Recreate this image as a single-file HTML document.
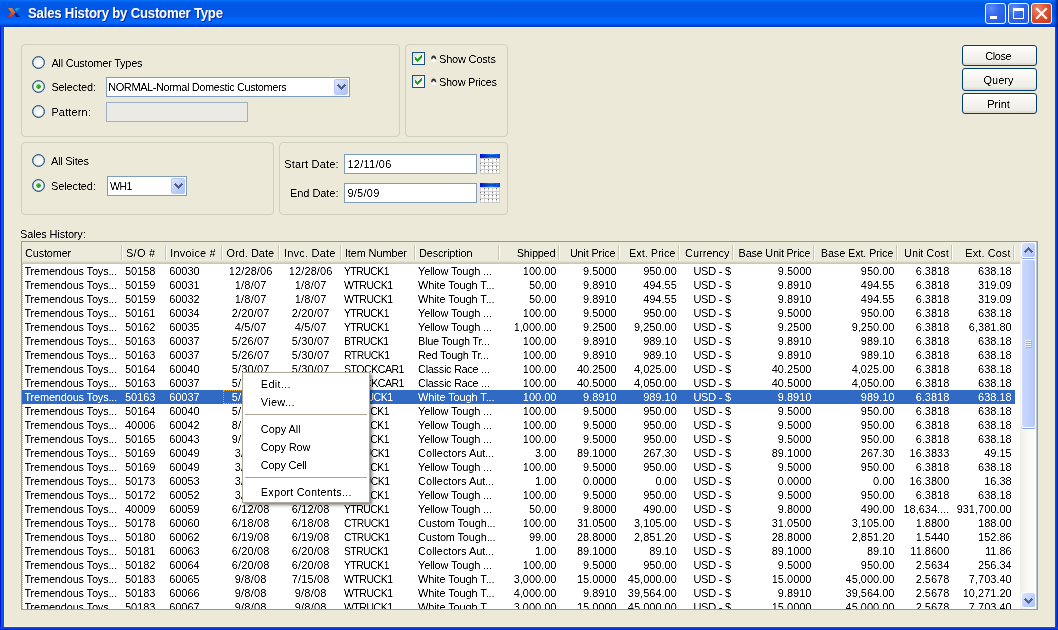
<!DOCTYPE html>
<html>
<head>
<meta charset="utf-8">
<title>Sales History by Customer Type</title>
<style>
html,body{margin:0;padding:0;}
body{width:1058px;height:630px;overflow:hidden;position:relative;background:#ece9d8;font-family:"Liberation Sans",sans-serif;font-size:11px;color:#000;}
div{box-sizing:border-box;}
.abs,.t,.sep,.selrow,.gb,.radio,.chk,.btn,.inp,.combo,.cal{position:absolute;}
.t{filter:url(#crisp);transform-origin:0 0;}
.t{white-space:pre;line-height:14px;height:14px;font-size:11px;}
.t.s{color:#fff;}
/* window frame */
#title{left:0;top:0;width:1058px;height:27px;background:linear-gradient(to bottom,#0a72fb 0px,#0368f3 1px,#0058e6 3px,#0057e5 13px,#005cec 16px,#0066fa 20px,#0069ff 22px,#0060f2 24px,#0048d8 25px,#0036c0 27px);}
#bl{left:0;top:27px;width:4px;height:603px;background:linear-gradient(to right,#0019cf 0px,#0019cf 1px,#0a50e6 1px,#0855e8 3px,#0048d8 4px);}
#br{left:1055px;top:27px;width:3px;height:603px;background:linear-gradient(to right,#0a50e6 0px,#0848dc 1px,#0030c8 2px,#0019cf 3px);}
#bb{left:0;top:627px;width:1058px;height:3px;background:linear-gradient(to bottom,#0048d8 0px,#0a50e6 1px,#0019cf 3px);}
#hl{left:4px;top:27px;width:1051px;height:600px;border:1px solid #f7f3e2;border-right-color:#ece9d8;}
#ttext{left:27.6px;top:5px;font-size:14px;font-weight:700;color:#fff;line-height:16px;height:16px;letter-spacing:-0.2px;white-space:pre;transform:scaleX(0.938);transform-origin:0 0;text-shadow:1px 1px 0 #0a2a9a;}
.wb{position:absolute;top:3px;width:21px;height:21px;border:1px solid #fff;border-radius:3px;background:radial-gradient(circle at 28% 22%,#5c8df8 0%,#3068ee 40%,#2458e0 100%);}
#wclose{background:radial-gradient(circle at 30% 25%,#ee8a6c 0%,#dd5230 45%,#c63412 100%);}
/* group boxes */
.gb{border:1px solid #d0d0bf;border-radius:4px;}
/* radio */
.radio{width:13px;height:13px;border-radius:50%;border:1px solid #1c5180;box-shadow:inset 0 0 0 0.5px rgba(28,81,128,0.55);background:radial-gradient(circle at 65% 65%,#ffffff 0%,#f4f3ee 45%,#dcdbd2 100%);}
.radio.on::after{content:"";position:absolute;left:3px;top:3px;width:5px;height:5px;background:linear-gradient(135deg,#63d95a 0%,#2cae2c 50%,#1a941a 100%);clip-path:polygon(50% -12%,112% 50%,50% 112%,-12% 50%);}
/* checkbox */
.chk{width:13px;height:13px;border:1px solid #1c5180;background:linear-gradient(135deg,#dcdbd2 0%,#f4f3ee 50%,#ffffff 100%);}
/* inputs */
.inp{border:1px solid #7f9db9;background:#fff;}
.inp.dis{background:#ebeae4;border-color:#9db0c6;}
.combo{border:1px solid #7f9db9;background:#fff;}
.cbtn{position:absolute;right:1px;top:1px;bottom:1px;width:14px;border-radius:2px;border:1px solid #b4c6f6;background:linear-gradient(135deg,#dfe8fe 0%,#c3d3fc 45%,#adc1f6 100%);}
/* push buttons */
.btn span{display:inline-block;}
.btn{width:75px;height:21px;left:962px;border:1px solid #003c74;border-radius:3px;background:linear-gradient(to bottom,#ffffff 0%,#f6f5f0 40%,#eeede6 85%,#d9d6c8 100%);text-align:center;line-height:19px;font-size:11px;letter-spacing:-0.1px;}
/* table */
#tbl{left:21px;top:241px;width:1017px;height:369px;border:1px solid #7f9db9;background:#fff;}
#thead{left:22px;top:242px;width:999px;height:22px;background:linear-gradient(to bottom,#ebeadb 0px,#ebeadb 19px,#e3e0cf 19px,#e3e0cf 20px,#d6d2c1 20px,#d6d2c1 21px,#cac6b3 21px,#cac6b3 22px);}
.sep{top:245px;width:2px;height:15px;border-left:1px solid #c7c5b2;border-right:1px solid #fff;}
.selrow{left:22px;width:993px;height:14px;background:#316ac5;}
#dots{left:22px;top:264px;width:1px;height:345px;background:repeating-linear-gradient(to bottom,#b8b4a4 0px,#b8b4a4 1px,#fff 1px,#fff 2px);}
#clip{left:0;top:0;width:1058px;height:609px;overflow:hidden;}
/* scrollbar */
#sb{left:1020px;top:242px;width:17px;height:367px;background:linear-gradient(to right,#eeece5 0px,#f4f2ed 3px,#fbfaf7 9px,#fefefb 17px);}
.sbb{position:absolute;left:1021px;width:15px;height:16px;margin-top:-1px;border:1px solid #fff;border-radius:3px;background:linear-gradient(135deg,#dbe5fe 0%,#c3d3fc 45%,#adc1f6 100%);}
.sbl{position:absolute;left:1021px;width:15px;height:3px;margin-top:-2px;border:0;border-bottom:1px solid #8aa6dc;border-radius:0 0 3px 3px;background:transparent;}
#thumb{left:1021px;top:259px;width:15px;height:169px;border-radius:3px;border:1px solid #fff;background:linear-gradient(to right,#cad8fc 0%,#c2d2fb 45%,#b4c7f7 100%);}
/* menu */
#menu{left:242px;top:372px;width:128px;height:131px;background:#fff;border:1px solid #aca899;box-shadow:2px 2px 3px rgba(0,0,0,0.5);}
.mi{position:absolute;left:19px;white-space:pre;line-height:14px;height:14px;letter-spacing:0px;}
.msep{position:absolute;left:2px;width:122px;height:1px;background:#aca899;}
</style>
</head>
<body>
<svg width="0" height="0" style="position:absolute"><defs>
<filter id="crisp" x="-0.1" y="-0.1" width="1.2" height="1.2" color-interpolation-filters="sRGB"><feComponentTransfer><feFuncA type="table" tableValues="0 0 0.5 1 1"/></feComponentTransfer></filter>
</defs></svg>
<!-- window frame -->
<div class="abs" id="hl"></div>
<div class="abs" id="title"></div>
<div class="abs" id="bl"></div>
<div class="abs" style="left:1054px;top:0;width:4px;height:27px;background:linear-gradient(to right,rgba(0,30,150,0) 0px,rgba(0,30,150,0.55) 2px,rgba(0,20,130,0.8) 4px)"></div>
<div class="abs" id="br"></div>
<div class="abs" id="bb"></div>
<svg class="abs" style="position:absolute;left:7px;top:7px" width="14" height="11" viewBox="7 7 14 11">
  <defs><linearGradient id="og" x1="0" y1="0" x2="0" y2="1"><stop offset="0" stop-color="#e8841e"/><stop offset="0.5" stop-color="#e65a1c"/><stop offset="1" stop-color="#dc261c"/></linearGradient></defs>
  <polygon points="8.1,8 12,8 15.3,12.3 11.8,17 8,17 11.2,12.5" fill="url(#og)"/>
  <polygon points="14.7,9.2 16.2,8 19.8,8 16.6,11.6" fill="#11a6d8"/>
  <polygon points="15.4,13 16.6,13.2 20,17 16.2,17 14.6,14.8" fill="#0a1f8c"/>
</svg>
<div class="abs" id="ttext">Sales History by Customer Type</div>
<div class="wb" style="left:985px"><div class="abs" style="left:4px;top:12px;width:7px;height:3px;background:#fff"></div></div>
<div class="wb" style="left:1008px"><div class="abs" style="left:4px;top:4px;width:11px;height:11px;border:1px solid #fff;border-top-width:3px"></div></div>
<div class="wb" id="wclose" style="left:1031px"><svg width="19" height="19" style="position:absolute;left:0;top:0"><path d="M5 5 L14 14 M14 5 L5 14" stroke="#fff" stroke-width="2.2" stroke-linecap="square"/></svg></div>

<!-- group boxes -->
<div class="gb" style="left:21px;top:44px;width:379px;height:93px"></div>
<div class="gb" style="left:405px;top:44px;width:103px;height:93px"></div>
<div class="gb" style="left:21px;top:142px;width:253px;height:73px"></div>
<div class="gb" style="left:279px;top:142px;width:229px;height:73px"></div>

<!-- customer type group -->
<div class="radio" style="left:32px;top:56px"></div>
<div class="radio on" style="left:32px;top:80px"></div>
<div class="combo" style="left:106px;top:77px;width:244px;height:20px"><div class="cbtn"></div></div>
<svg class="abs" style="left:337px;top:84px" width="9" height="6" shape-rendering="crispEdges"><path d="M1 0h1v1h-1zM7 0h1v1h-1zM0 1h3v1h-3zM6 1h3v1h-3zM1 2h3v1h-3zM5 2h3v1h-3zM2 3h5v1h-5zM3 4h3v1h-3zM4 5h1v1h-1z" fill="#4d6185"/></svg>
<div class="radio" style="left:32px;top:105px"></div>
<div class="inp dis" style="left:106px;top:102px;width:142px;height:20px"></div>

<!-- checkboxes -->
<div class="chk" style="left:412px;top:52px"></div>
<svg class="abs" style="left:415px;top:55px" width="7" height="7" shape-rendering="crispEdges"><path d="M6 0h1v1h-1zM5 1h2v1h-2zM0 2h1v1h-1zM4 2h3v1h-3zM0 3h2v1h-2zM3 3h3v1h-3zM0 4h5v1h-5zM1 5h3v1h-3zM2 6h1v1h-1z" fill="#21a121"/></svg><svg class="abs" style="left:431px;top:55px" width="6" height="8"><path d="M0.5 6.6 L0.5 3 Q2.65 0 4.8 3 L4.8 6.6 Q2.65 7.6 0.5 6.6 Z" fill="#ffffff"/><path d="M0.1 4.3 Q0.2 0.5 2.65 0.5 Q5.1 0.5 5.2 4.3 L3.8 4.3 Q3.7 2.5 2.65 2.5 Q1.6 2.5 1.5 4.3 Z" fill="#2e2e2e"/></svg>
<div class="chk" style="left:412px;top:75px"></div>
<svg class="abs" style="left:415px;top:78px" width="7" height="7" shape-rendering="crispEdges"><path d="M6 0h1v1h-1zM5 1h2v1h-2zM0 2h1v1h-1zM4 2h3v1h-3zM0 3h2v1h-2zM3 3h3v1h-3zM0 4h5v1h-5zM1 5h3v1h-3zM2 6h1v1h-1z" fill="#21a121"/></svg><svg class="abs" style="left:431px;top:78px" width="6" height="8"><path d="M0.5 6.6 L0.5 3 Q2.65 0 4.8 3 L4.8 6.6 Q2.65 7.6 0.5 6.6 Z" fill="#ffffff"/><path d="M0.1 4.3 Q0.2 0.5 2.65 0.5 Q5.1 0.5 5.2 4.3 L3.8 4.3 Q3.7 2.5 2.65 2.5 Q1.6 2.5 1.5 4.3 Z" fill="#2e2e2e"/></svg>

<!-- sites group -->
<div class="radio" style="left:32px;top:154px"></div>
<div class="radio on" style="left:32px;top:179px"></div>
<div class="combo" style="left:107px;top:176px;width:80px;height:20px"><div class="cbtn"></div></div>
<svg class="abs" style="left:174px;top:183px" width="9" height="6" shape-rendering="crispEdges"><path d="M1 0h1v1h-1zM7 0h1v1h-1zM0 1h3v1h-3zM6 1h3v1h-3zM1 2h3v1h-3zM5 2h3v1h-3zM2 3h5v1h-5zM3 4h3v1h-3zM4 5h1v1h-1z" fill="#4d6185"/></svg>

<!-- dates group -->
<div class="inp" style="left:344px;top:154px;width:133px;height:20px"></div>
<svg class="abs" style="left:480px;top:154px" width="20" height="20" shape-rendering="crispEdges"><defs><linearGradient id="cg154" x1="0" y1="0" x2="1" y2="0"><stop offset="0" stop-color="#0008e0"/><stop offset="0.55" stop-color="#1a86e4"/><stop offset="1" stop-color="#1038f0"/></linearGradient></defs><rect x="0" y="0" width="20" height="20" fill="#fff"/><rect x="0" y="0" width="20" height="4" fill="url(#cg154)"/><rect x="2" y="1" width="14" height="2" fill="#0a2a9c" opacity="0.55"/><rect x="0" y="4" width="1" height="16" fill="#d0d0d0"/><rect x="4" y="4" width="1" height="16" fill="#d0d0d0"/><rect x="8" y="4" width="1" height="16" fill="#d0d0d0"/><rect x="12" y="4" width="1" height="16" fill="#d0d0d0"/><rect x="16" y="4" width="1" height="16" fill="#d0d0d0"/><rect x="19" y="4" width="1" height="16" fill="#d0d0d0"/><rect x="0" y="4" width="20" height="1" fill="#cbcbcb"/><rect x="0" y="8" width="20" height="1" fill="#cbcbcb"/><rect x="0" y="11" width="20" height="1" fill="#cbcbcb"/><rect x="0" y="15" width="20" height="1" fill="#cbcbcb"/><rect x="0" y="19" width="20" height="1" fill="#cbcbcb"/><rect x="16" y="5" width="1" height="1" fill="#6e6e6e"/><rect x="0" y="9" width="1" height="1" fill="#6e6e6e"/><rect x="12" y="9" width="1" height="1" fill="#6e6e6e"/><rect x="4" y="12" width="1" height="1" fill="#6e6e6e"/><rect x="8" y="12" width="1" height="1" fill="#6e6e6e"/><rect x="12" y="12" width="1" height="1" fill="#6e6e6e"/><rect x="16" y="12" width="1" height="1" fill="#6e6e6e"/><rect x="0" y="16" width="1" height="1" fill="#6e6e6e"/><rect x="8" y="16" width="1" height="1" fill="#6e6e6e"/><rect x="16" y="16" width="1" height="1" fill="#6e6e6e"/><rect x="4" y="5" width="1" height="1" fill="#6e6e6e"/><rect x="8" y="5" width="1" height="1" fill="#6e6e6e"/><rect x="4" y="9" width="1" height="1" fill="#6e6e6e"/><rect x="12" y="16" width="1" height="1" fill="#6e6e6e"/></svg>
<div class="inp" style="left:344px;top:183px;width:133px;height:20px"></div>
<svg class="abs" style="left:480px;top:183px" width="20" height="20" shape-rendering="crispEdges"><defs><linearGradient id="cg183" x1="0" y1="0" x2="1" y2="0"><stop offset="0" stop-color="#0008e0"/><stop offset="0.55" stop-color="#1a86e4"/><stop offset="1" stop-color="#1038f0"/></linearGradient></defs><rect x="0" y="0" width="20" height="20" fill="#fff"/><rect x="0" y="0" width="20" height="4" fill="url(#cg183)"/><rect x="2" y="1" width="14" height="2" fill="#0a2a9c" opacity="0.55"/><rect x="0" y="4" width="1" height="16" fill="#d0d0d0"/><rect x="4" y="4" width="1" height="16" fill="#d0d0d0"/><rect x="8" y="4" width="1" height="16" fill="#d0d0d0"/><rect x="12" y="4" width="1" height="16" fill="#d0d0d0"/><rect x="16" y="4" width="1" height="16" fill="#d0d0d0"/><rect x="19" y="4" width="1" height="16" fill="#d0d0d0"/><rect x="0" y="4" width="20" height="1" fill="#cbcbcb"/><rect x="0" y="8" width="20" height="1" fill="#cbcbcb"/><rect x="0" y="11" width="20" height="1" fill="#cbcbcb"/><rect x="0" y="15" width="20" height="1" fill="#cbcbcb"/><rect x="0" y="19" width="20" height="1" fill="#cbcbcb"/><rect x="16" y="5" width="1" height="1" fill="#6e6e6e"/><rect x="0" y="9" width="1" height="1" fill="#6e6e6e"/><rect x="12" y="9" width="1" height="1" fill="#6e6e6e"/><rect x="4" y="12" width="1" height="1" fill="#6e6e6e"/><rect x="8" y="12" width="1" height="1" fill="#6e6e6e"/><rect x="12" y="12" width="1" height="1" fill="#6e6e6e"/><rect x="16" y="12" width="1" height="1" fill="#6e6e6e"/><rect x="0" y="16" width="1" height="1" fill="#6e6e6e"/><rect x="8" y="16" width="1" height="1" fill="#6e6e6e"/><rect x="16" y="16" width="1" height="1" fill="#6e6e6e"/><rect x="4" y="5" width="1" height="1" fill="#6e6e6e"/><rect x="8" y="5" width="1" height="1" fill="#6e6e6e"/><rect x="4" y="9" width="1" height="1" fill="#6e6e6e"/><rect x="12" y="16" width="1" height="1" fill="#6e6e6e"/></svg>

<!-- push buttons -->
<div class="btn" style="top:45px"></div>
<div class="btn" style="top:68px;height:23px"></div>
<div class="btn" style="top:93px"></div>

<!-- table -->
<div class="abs" id="tbl"></div>
<div class="abs" id="thead"></div>
<div class="abs" id="dots"></div>
<div class="abs" id="clip">
<div class="sep" style="left:121px"></div>
<div class="sep" style="left:165px"></div>
<div class="sep" style="left:221px"></div>
<div class="sep" style="left:278px"></div>
<div class="sep" style="left:340px"></div>
<div class="sep" style="left:414px"></div>
<div class="sep" style="left:498px"></div>
<div class="sep" style="left:558px"></div>
<div class="sep" style="left:618px"></div>
<div class="sep" style="left:678px"></div>
<div class="sep" style="left:732px"></div>
<div class="sep" style="left:813px"></div>
<div class="sep" style="left:896px"></div>
<div class="sep" style="left:951px"></div>
<div class="sep" style="left:1013px"></div>
<div class="selrow" style="top:390px"></div><div class="abs" style="left:223px;top:390px;width:56px;height:14px;border:1px dotted #e8a53a"></div>
<div class="t h" style="left:25.00px;top:246px;letter-spacing:-0.211px;">Customer</div>
<div class="t h" style="left:126.00px;top:246px;letter-spacing:0.255px;">S/O #</div>
<div class="t h" style="left:170.30px;top:246px;letter-spacing:0.174px;">Invoice #</div>
<div class="t h" style="left:226.40px;top:246px;letter-spacing:0.012px;">Ord. Date</div>
<div class="t h" style="left:283.90px;top:246px;letter-spacing:0.217px;">Invc. Date</div>
<div class="t h" style="left:344.90px;top:246px;letter-spacing:-0.143px;">Item Number</div>
<div class="t h" style="left:419.00px;top:246px;letter-spacing:-0.148px;">Description</div>
<div class="t h" style="left:516.75px;top:246px;letter-spacing:-0.254px;">Shipped</div>
<div class="t h" style="left:569.89px;top:246px;letter-spacing:-0.209px;">Unit Price</div>
<div class="t h" style="left:629.12px;top:246px;letter-spacing:-0.078px;">Ext. Price</div>
<div class="t h" style="left:685.00px;top:246px;letter-spacing:-0.016px;">Currency</div>
<div class="t h" style="left:738.61px;top:246px;letter-spacing:-0.287px;">Base Unit Price</div>
<div class="t h" style="left:820.73px;top:246px;letter-spacing:-0.174px;">Base Ext. Price</div>
<div class="t h" style="left:904.04px;top:246px;letter-spacing:-0.061px;">Unit Cost</div>
<div class="t h" style="left:965.36px;top:246px;letter-spacing:0.064px;">Ext. Cost</div>
<div class="t" style="left:24.40px;top:264px;letter-spacing:-0.183px;">Tremendous Toys...</div>
<div class="t" style="left:125.00px;top:264px;letter-spacing:-0.039px;">50158</div>
<div class="t" style="left:169.30px;top:264px;letter-spacing:-0.079px;">60030</div>
<div class="t" style="left:228.85px;top:264px;letter-spacing:0.096px;">12/28/06</div>
<div class="t" style="left:288.85px;top:264px;letter-spacing:0.096px;">12/28/06</div>
<div class="t" style="left:343.60px;top:264px;letter-spacing:-0.550px;transform:scaleX(0.9475);">YTRUCK1</div>
<div class="t" style="left:418.00px;top:264px;letter-spacing:-0.178px;">Yellow Tough ...</div>
<div class="t" style="left:522.84px;top:264px;">100.00</div>
<div class="t" style="left:583.04px;top:264px;">9.5000</div>
<div class="t" style="left:643.14px;top:264px;">950.00</div>
<div class="t" style="left:693.40px;top:264px;letter-spacing:-0.246px;">USD - $</div>
<div class="t" style="left:777.84px;top:264px;">9.5000</div>
<div class="t" style="left:860.84px;top:264px;">950.00</div>
<div class="t" style="left:915.64px;top:264px;">6.3818</div>
<div class="t" style="left:978.04px;top:264px;">638.18</div>
<div class="t" style="left:24.40px;top:278px;letter-spacing:-0.183px;">Tremendous Toys...</div>
<div class="t" style="left:125.00px;top:278px;letter-spacing:-0.039px;">50159</div>
<div class="t" style="left:169.30px;top:278px;letter-spacing:-0.079px;">60031</div>
<div class="t" style="left:234.80px;top:278px;letter-spacing:0.201px;">1/8/07</div>
<div class="t" style="left:294.80px;top:278px;letter-spacing:0.201px;">1/8/07</div>
<div class="t" style="left:343.60px;top:278px;letter-spacing:-0.550px;transform:scaleX(0.9596);">WTRUCK1</div>
<div class="t" style="left:418.00px;top:278px;letter-spacing:-0.124px;">White Tough T...</div>
<div class="t" style="left:528.97px;top:278px;">50.00</div>
<div class="t" style="left:583.04px;top:278px;">9.8910</div>
<div class="t" style="left:643.14px;top:278px;">494.55</div>
<div class="t" style="left:693.40px;top:278px;letter-spacing:-0.246px;">USD - $</div>
<div class="t" style="left:777.84px;top:278px;">9.8910</div>
<div class="t" style="left:860.84px;top:278px;">494.55</div>
<div class="t" style="left:915.64px;top:278px;">6.3818</div>
<div class="t" style="left:978.04px;top:278px;">319.09</div>
<div class="t" style="left:24.40px;top:292px;letter-spacing:-0.183px;">Tremendous Toys...</div>
<div class="t" style="left:125.00px;top:292px;letter-spacing:-0.039px;">50159</div>
<div class="t" style="left:169.30px;top:292px;letter-spacing:-0.079px;">60032</div>
<div class="t" style="left:234.80px;top:292px;letter-spacing:0.201px;">1/8/07</div>
<div class="t" style="left:294.80px;top:292px;letter-spacing:0.201px;">1/8/07</div>
<div class="t" style="left:343.60px;top:292px;letter-spacing:-0.550px;transform:scaleX(0.9596);">WTRUCK1</div>
<div class="t" style="left:418.00px;top:292px;letter-spacing:-0.124px;">White Tough T...</div>
<div class="t" style="left:528.97px;top:292px;">50.00</div>
<div class="t" style="left:583.04px;top:292px;">9.8910</div>
<div class="t" style="left:643.14px;top:292px;">494.55</div>
<div class="t" style="left:693.40px;top:292px;letter-spacing:-0.246px;">USD - $</div>
<div class="t" style="left:777.84px;top:292px;">9.8910</div>
<div class="t" style="left:860.84px;top:292px;">494.55</div>
<div class="t" style="left:915.64px;top:292px;">6.3818</div>
<div class="t" style="left:978.04px;top:292px;">319.09</div>
<div class="t" style="left:24.40px;top:306px;letter-spacing:-0.183px;">Tremendous Toys...</div>
<div class="t" style="left:125.00px;top:306px;letter-spacing:-0.039px;">50161</div>
<div class="t" style="left:169.30px;top:306px;letter-spacing:-0.079px;">60034</div>
<div class="t" style="left:231.74px;top:306px;letter-spacing:0.171px;">2/20/07</div>
<div class="t" style="left:291.74px;top:306px;letter-spacing:0.171px;">2/20/07</div>
<div class="t" style="left:343.60px;top:306px;letter-spacing:-0.550px;transform:scaleX(0.9475);">YTRUCK1</div>
<div class="t" style="left:418.00px;top:306px;letter-spacing:-0.178px;">Yellow Tough ...</div>
<div class="t" style="left:522.84px;top:306px;">100.00</div>
<div class="t" style="left:583.04px;top:306px;">9.5000</div>
<div class="t" style="left:643.14px;top:306px;">950.00</div>
<div class="t" style="left:693.40px;top:306px;letter-spacing:-0.246px;">USD - $</div>
<div class="t" style="left:777.84px;top:306px;">9.5000</div>
<div class="t" style="left:860.84px;top:306px;">950.00</div>
<div class="t" style="left:915.64px;top:306px;">6.3818</div>
<div class="t" style="left:978.04px;top:306px;">638.18</div>
<div class="t" style="left:24.40px;top:320px;letter-spacing:-0.183px;">Tremendous Toys...</div>
<div class="t" style="left:125.00px;top:320px;letter-spacing:-0.039px;">50162</div>
<div class="t" style="left:169.30px;top:320px;letter-spacing:-0.079px;">60035</div>
<div class="t" style="left:234.80px;top:320px;letter-spacing:0.201px;">4/5/07</div>
<div class="t" style="left:294.80px;top:320px;letter-spacing:0.201px;">4/5/07</div>
<div class="t" style="left:343.60px;top:320px;letter-spacing:-0.550px;transform:scaleX(0.9475);">YTRUCK1</div>
<div class="t" style="left:418.00px;top:320px;letter-spacing:-0.178px;">Yellow Tough ...</div>
<div class="t" style="left:513.67px;top:320px;">1,000.00</div>
<div class="t" style="left:583.04px;top:320px;">9.2500</div>
<div class="t" style="left:633.97px;top:320px;">9,250.00</div>
<div class="t" style="left:693.40px;top:320px;letter-spacing:-0.246px;">USD - $</div>
<div class="t" style="left:777.84px;top:320px;">9.2500</div>
<div class="t" style="left:851.67px;top:320px;">9,250.00</div>
<div class="t" style="left:915.64px;top:320px;">6.3818</div>
<div class="t" style="left:968.87px;top:320px;">6,381.80</div>
<div class="t" style="left:24.40px;top:334px;letter-spacing:-0.183px;">Tremendous Toys...</div>
<div class="t" style="left:125.00px;top:334px;letter-spacing:-0.039px;">50163</div>
<div class="t" style="left:169.30px;top:334px;letter-spacing:-0.079px;">60037</div>
<div class="t" style="left:231.74px;top:334px;letter-spacing:0.171px;">5/26/07</div>
<div class="t" style="left:291.74px;top:334px;letter-spacing:0.171px;">5/30/07</div>
<div class="t" style="left:343.60px;top:334px;letter-spacing:-0.550px;transform:scaleX(0.9370);">BTRUCK1</div>
<div class="t" style="left:418.00px;top:334px;letter-spacing:-0.303px;">Blue Tough Tr...</div>
<div class="t" style="left:522.84px;top:334px;">100.00</div>
<div class="t" style="left:583.04px;top:334px;">9.8910</div>
<div class="t" style="left:643.14px;top:334px;">989.10</div>
<div class="t" style="left:693.40px;top:334px;letter-spacing:-0.246px;">USD - $</div>
<div class="t" style="left:777.84px;top:334px;">9.8910</div>
<div class="t" style="left:860.84px;top:334px;">989.10</div>
<div class="t" style="left:915.64px;top:334px;">6.3818</div>
<div class="t" style="left:978.04px;top:334px;">638.18</div>
<div class="t" style="left:24.40px;top:348px;letter-spacing:-0.183px;">Tremendous Toys...</div>
<div class="t" style="left:125.00px;top:348px;letter-spacing:-0.039px;">50163</div>
<div class="t" style="left:169.30px;top:348px;letter-spacing:-0.079px;">60037</div>
<div class="t" style="left:231.74px;top:348px;letter-spacing:0.171px;">5/26/07</div>
<div class="t" style="left:291.74px;top:348px;letter-spacing:0.171px;">5/30/07</div>
<div class="t" style="left:343.60px;top:348px;letter-spacing:-0.550px;transform:scaleX(0.9496);">RTRUCK1</div>
<div class="t" style="left:418.00px;top:348px;letter-spacing:-0.254px;">Red Tough Tr...</div>
<div class="t" style="left:522.84px;top:348px;">100.00</div>
<div class="t" style="left:583.04px;top:348px;">9.8910</div>
<div class="t" style="left:643.14px;top:348px;">989.10</div>
<div class="t" style="left:693.40px;top:348px;letter-spacing:-0.246px;">USD - $</div>
<div class="t" style="left:777.84px;top:348px;">9.8910</div>
<div class="t" style="left:860.84px;top:348px;">989.10</div>
<div class="t" style="left:915.64px;top:348px;">6.3818</div>
<div class="t" style="left:978.04px;top:348px;">638.18</div>
<div class="t" style="left:24.40px;top:362px;letter-spacing:-0.183px;">Tremendous Toys...</div>
<div class="t" style="left:125.00px;top:362px;letter-spacing:-0.039px;">50164</div>
<div class="t" style="left:169.30px;top:362px;letter-spacing:-0.079px;">60040</div>
<div class="t" style="left:231.74px;top:362px;letter-spacing:0.171px;">5/30/07</div>
<div class="t" style="left:291.74px;top:362px;letter-spacing:0.171px;">5/30/07</div>
<div class="t" style="left:343.60px;top:362px;letter-spacing:-0.550px;transform:scaleX(0.9662);">STOCKCAR1</div>
<div class="t" style="left:418.00px;top:362px;letter-spacing:-0.314px;">Classic Race ...</div>
<div class="t" style="left:522.84px;top:362px;">100.00</div>
<div class="t" style="left:576.93px;top:362px;">40.2500</div>
<div class="t" style="left:633.97px;top:362px;">4,025.00</div>
<div class="t" style="left:693.40px;top:362px;letter-spacing:-0.246px;">USD - $</div>
<div class="t" style="left:771.73px;top:362px;">40.2500</div>
<div class="t" style="left:851.67px;top:362px;">4,025.00</div>
<div class="t" style="left:915.64px;top:362px;">6.3818</div>
<div class="t" style="left:978.04px;top:362px;">638.18</div>
<div class="t" style="left:24.40px;top:376px;letter-spacing:-0.183px;">Tremendous Toys...</div>
<div class="t" style="left:125.00px;top:376px;letter-spacing:-0.039px;">50163</div>
<div class="t" style="left:169.30px;top:376px;letter-spacing:-0.079px;">60037</div>
<div class="t" style="left:231.74px;top:376px;letter-spacing:0.171px;">5/30/07</div>
<div class="t" style="left:291.74px;top:376px;letter-spacing:0.171px;">5/30/07</div>
<div class="t" style="left:343.60px;top:376px;letter-spacing:-0.550px;transform:scaleX(0.9662);">STOCKCAR1</div>
<div class="t" style="left:418.00px;top:376px;letter-spacing:-0.314px;">Classic Race ...</div>
<div class="t" style="left:522.84px;top:376px;">100.00</div>
<div class="t" style="left:576.93px;top:376px;">40.5000</div>
<div class="t" style="left:633.97px;top:376px;">4,050.00</div>
<div class="t" style="left:693.40px;top:376px;letter-spacing:-0.246px;">USD - $</div>
<div class="t" style="left:771.73px;top:376px;">40.5000</div>
<div class="t" style="left:851.67px;top:376px;">4,050.00</div>
<div class="t" style="left:915.64px;top:376px;">6.3818</div>
<div class="t" style="left:978.04px;top:376px;">638.18</div>
<div class="t s" style="left:24.40px;top:390px;letter-spacing:-0.183px;">Tremendous Toys...</div>
<div class="t s" style="left:125.00px;top:390px;letter-spacing:-0.039px;">50163</div>
<div class="t s" style="left:169.30px;top:390px;letter-spacing:-0.079px;">60037</div>
<div class="t s" style="left:231.74px;top:390px;letter-spacing:0.171px;">5/30/07</div>
<div class="t s" style="left:291.74px;top:390px;letter-spacing:0.171px;">5/30/07</div>
<div class="t s" style="left:343.60px;top:390px;letter-spacing:-0.550px;transform:scaleX(0.9596);">WTRUCK1</div>
<div class="t s" style="left:418.00px;top:390px;letter-spacing:-0.124px;">White Tough T...</div>
<div class="t s" style="left:522.84px;top:390px;">100.00</div>
<div class="t s" style="left:583.04px;top:390px;">9.8910</div>
<div class="t s" style="left:643.14px;top:390px;">989.10</div>
<div class="t s" style="left:693.40px;top:390px;letter-spacing:-0.246px;">USD - $</div>
<div class="t s" style="left:777.84px;top:390px;">9.8910</div>
<div class="t s" style="left:860.84px;top:390px;">989.10</div>
<div class="t s" style="left:915.64px;top:390px;">6.3818</div>
<div class="t s" style="left:978.04px;top:390px;">638.18</div>
<div class="t" style="left:24.40px;top:404px;letter-spacing:-0.183px;">Tremendous Toys...</div>
<div class="t" style="left:125.00px;top:404px;letter-spacing:-0.039px;">50164</div>
<div class="t" style="left:169.30px;top:404px;letter-spacing:-0.079px;">60040</div>
<div class="t" style="left:231.74px;top:404px;letter-spacing:0.171px;">5/30/07</div>
<div class="t" style="left:291.74px;top:404px;letter-spacing:0.171px;">5/30/07</div>
<div class="t" style="left:343.60px;top:404px;letter-spacing:-0.550px;transform:scaleX(0.9475);">YTRUCK1</div>
<div class="t" style="left:418.00px;top:404px;letter-spacing:-0.178px;">Yellow Tough ...</div>
<div class="t" style="left:522.84px;top:404px;">100.00</div>
<div class="t" style="left:583.04px;top:404px;">9.5000</div>
<div class="t" style="left:643.14px;top:404px;">950.00</div>
<div class="t" style="left:693.40px;top:404px;letter-spacing:-0.246px;">USD - $</div>
<div class="t" style="left:777.84px;top:404px;">9.5000</div>
<div class="t" style="left:860.84px;top:404px;">950.00</div>
<div class="t" style="left:915.64px;top:404px;">6.3818</div>
<div class="t" style="left:978.04px;top:404px;">638.18</div>
<div class="t" style="left:24.40px;top:418px;letter-spacing:-0.183px;">Tremendous Toys...</div>
<div class="t" style="left:125.00px;top:418px;letter-spacing:-0.039px;">40006</div>
<div class="t" style="left:169.30px;top:418px;letter-spacing:-0.079px;">60042</div>
<div class="t" style="left:231.74px;top:418px;letter-spacing:0.171px;">8/15/07</div>
<div class="t" style="left:291.74px;top:418px;letter-spacing:0.171px;">8/15/07</div>
<div class="t" style="left:343.60px;top:418px;letter-spacing:-0.550px;transform:scaleX(0.9475);">YTRUCK1</div>
<div class="t" style="left:418.00px;top:418px;letter-spacing:-0.178px;">Yellow Tough ...</div>
<div class="t" style="left:522.84px;top:418px;">100.00</div>
<div class="t" style="left:583.04px;top:418px;">9.5000</div>
<div class="t" style="left:643.14px;top:418px;">950.00</div>
<div class="t" style="left:693.40px;top:418px;letter-spacing:-0.246px;">USD - $</div>
<div class="t" style="left:777.84px;top:418px;">9.5000</div>
<div class="t" style="left:860.84px;top:418px;">950.00</div>
<div class="t" style="left:915.64px;top:418px;">6.3818</div>
<div class="t" style="left:978.04px;top:418px;">638.18</div>
<div class="t" style="left:24.40px;top:432px;letter-spacing:-0.183px;">Tremendous Toys...</div>
<div class="t" style="left:125.00px;top:432px;letter-spacing:-0.039px;">50165</div>
<div class="t" style="left:169.30px;top:432px;letter-spacing:-0.079px;">60043</div>
<div class="t" style="left:231.74px;top:432px;letter-spacing:0.171px;">9/10/07</div>
<div class="t" style="left:291.74px;top:432px;letter-spacing:0.171px;">9/10/07</div>
<div class="t" style="left:343.60px;top:432px;letter-spacing:-0.550px;transform:scaleX(0.9475);">YTRUCK1</div>
<div class="t" style="left:418.00px;top:432px;letter-spacing:-0.178px;">Yellow Tough ...</div>
<div class="t" style="left:522.84px;top:432px;">100.00</div>
<div class="t" style="left:583.04px;top:432px;">9.5000</div>
<div class="t" style="left:643.14px;top:432px;">950.00</div>
<div class="t" style="left:693.40px;top:432px;letter-spacing:-0.246px;">USD - $</div>
<div class="t" style="left:777.84px;top:432px;">9.5000</div>
<div class="t" style="left:860.84px;top:432px;">950.00</div>
<div class="t" style="left:915.64px;top:432px;">6.3818</div>
<div class="t" style="left:978.04px;top:432px;">638.18</div>
<div class="t" style="left:24.40px;top:446px;letter-spacing:-0.183px;">Tremendous Toys...</div>
<div class="t" style="left:125.00px;top:446px;letter-spacing:-0.039px;">50169</div>
<div class="t" style="left:169.30px;top:446px;letter-spacing:-0.079px;">60049</div>
<div class="t" style="left:234.80px;top:446px;letter-spacing:0.201px;">3/5/08</div>
<div class="t" style="left:294.80px;top:446px;letter-spacing:0.201px;">3/5/08</div>
<div class="t" style="left:343.60px;top:446px;letter-spacing:-0.550px;transform:scaleX(0.9459);">CTRUCK1</div>
<div class="t" style="left:418.00px;top:446px;letter-spacing:-0.038px;">Collectors Aut...</div>
<div class="t" style="left:535.08px;top:446px;">3.00</div>
<div class="t" style="left:576.93px;top:446px;">89.1000</div>
<div class="t" style="left:643.14px;top:446px;">267.30</div>
<div class="t" style="left:693.40px;top:446px;letter-spacing:-0.246px;">USD - $</div>
<div class="t" style="left:771.73px;top:446px;">89.1000</div>
<div class="t" style="left:860.84px;top:446px;">267.30</div>
<div class="t" style="left:909.53px;top:446px;">16.3833</div>
<div class="t" style="left:984.17px;top:446px;">49.15</div>
<div class="t" style="left:24.40px;top:460px;letter-spacing:-0.183px;">Tremendous Toys...</div>
<div class="t" style="left:125.00px;top:460px;letter-spacing:-0.039px;">50169</div>
<div class="t" style="left:169.30px;top:460px;letter-spacing:-0.079px;">60049</div>
<div class="t" style="left:234.80px;top:460px;letter-spacing:0.201px;">3/5/08</div>
<div class="t" style="left:294.80px;top:460px;letter-spacing:0.201px;">3/5/08</div>
<div class="t" style="left:343.60px;top:460px;letter-spacing:-0.550px;transform:scaleX(0.9475);">YTRUCK1</div>
<div class="t" style="left:418.00px;top:460px;letter-spacing:-0.178px;">Yellow Tough ...</div>
<div class="t" style="left:522.84px;top:460px;">100.00</div>
<div class="t" style="left:583.04px;top:460px;">9.5000</div>
<div class="t" style="left:643.14px;top:460px;">950.00</div>
<div class="t" style="left:693.40px;top:460px;letter-spacing:-0.246px;">USD - $</div>
<div class="t" style="left:777.84px;top:460px;">9.5000</div>
<div class="t" style="left:860.84px;top:460px;">950.00</div>
<div class="t" style="left:915.64px;top:460px;">6.3818</div>
<div class="t" style="left:978.04px;top:460px;">638.18</div>
<div class="t" style="left:24.40px;top:474px;letter-spacing:-0.183px;">Tremendous Toys...</div>
<div class="t" style="left:125.00px;top:474px;letter-spacing:-0.039px;">50173</div>
<div class="t" style="left:169.30px;top:474px;letter-spacing:-0.079px;">60053</div>
<div class="t" style="left:234.80px;top:474px;letter-spacing:0.201px;">3/5/08</div>
<div class="t" style="left:294.80px;top:474px;letter-spacing:0.201px;">3/5/08</div>
<div class="t" style="left:343.60px;top:474px;letter-spacing:-0.550px;transform:scaleX(0.9459);">CTRUCK1</div>
<div class="t" style="left:418.00px;top:474px;letter-spacing:-0.038px;">Collectors Aut...</div>
<div class="t" style="left:535.08px;top:474px;">1.00</div>
<div class="t" style="left:583.04px;top:474px;">0.0000</div>
<div class="t" style="left:655.38px;top:474px;">0.00</div>
<div class="t" style="left:693.40px;top:474px;letter-spacing:-0.246px;">USD - $</div>
<div class="t" style="left:777.84px;top:474px;">0.0000</div>
<div class="t" style="left:873.08px;top:474px;">0.00</div>
<div class="t" style="left:909.53px;top:474px;">16.3800</div>
<div class="t" style="left:984.17px;top:474px;">16.38</div>
<div class="t" style="left:24.40px;top:488px;letter-spacing:-0.183px;">Tremendous Toys...</div>
<div class="t" style="left:125.00px;top:488px;letter-spacing:-0.039px;">50172</div>
<div class="t" style="left:169.30px;top:488px;letter-spacing:-0.079px;">60052</div>
<div class="t" style="left:234.80px;top:488px;letter-spacing:0.201px;">3/5/08</div>
<div class="t" style="left:294.80px;top:488px;letter-spacing:0.201px;">3/5/08</div>
<div class="t" style="left:343.60px;top:488px;letter-spacing:-0.550px;transform:scaleX(0.9475);">YTRUCK1</div>
<div class="t" style="left:418.00px;top:488px;letter-spacing:-0.178px;">Yellow Tough ...</div>
<div class="t" style="left:522.84px;top:488px;">100.00</div>
<div class="t" style="left:583.04px;top:488px;">9.5000</div>
<div class="t" style="left:643.14px;top:488px;">950.00</div>
<div class="t" style="left:693.40px;top:488px;letter-spacing:-0.246px;">USD - $</div>
<div class="t" style="left:777.84px;top:488px;">9.5000</div>
<div class="t" style="left:860.84px;top:488px;">950.00</div>
<div class="t" style="left:915.64px;top:488px;">6.3818</div>
<div class="t" style="left:978.04px;top:488px;">638.18</div>
<div class="t" style="left:24.40px;top:502px;letter-spacing:-0.183px;">Tremendous Toys...</div>
<div class="t" style="left:125.00px;top:502px;letter-spacing:-0.039px;">40009</div>
<div class="t" style="left:169.30px;top:502px;letter-spacing:-0.079px;">60059</div>
<div class="t" style="left:231.74px;top:502px;letter-spacing:0.171px;">6/12/08</div>
<div class="t" style="left:291.74px;top:502px;letter-spacing:0.171px;">6/12/08</div>
<div class="t" style="left:343.60px;top:502px;letter-spacing:-0.550px;transform:scaleX(0.9475);">YTRUCK1</div>
<div class="t" style="left:418.00px;top:502px;letter-spacing:-0.178px;">Yellow Tough ...</div>
<div class="t" style="left:528.97px;top:502px;">50.00</div>
<div class="t" style="left:583.04px;top:502px;">9.8000</div>
<div class="t" style="left:643.14px;top:502px;">490.00</div>
<div class="t" style="left:693.40px;top:502px;letter-spacing:-0.246px;">USD - $</div>
<div class="t" style="left:777.84px;top:502px;">9.8000</div>
<div class="t" style="left:860.84px;top:502px;">490.00</div>
<div class="t" style="left:903.42px;top:502px;">18,634....</div>
<div class="t" style="left:956.64px;top:502px;">931,700.00</div>
<div class="t" style="left:24.40px;top:516px;letter-spacing:-0.183px;">Tremendous Toys...</div>
<div class="t" style="left:125.00px;top:516px;letter-spacing:-0.039px;">50178</div>
<div class="t" style="left:169.30px;top:516px;letter-spacing:-0.079px;">60060</div>
<div class="t" style="left:231.74px;top:516px;letter-spacing:0.171px;">6/18/08</div>
<div class="t" style="left:291.74px;top:516px;letter-spacing:0.171px;">6/18/08</div>
<div class="t" style="left:343.60px;top:516px;letter-spacing:-0.550px;transform:scaleX(0.9459);">CTRUCK1</div>
<div class="t" style="left:418.00px;top:516px;letter-spacing:-0.174px;">Custom Tough...</div>
<div class="t" style="left:522.84px;top:516px;">100.00</div>
<div class="t" style="left:576.93px;top:516px;">31.0500</div>
<div class="t" style="left:633.97px;top:516px;">3,105.00</div>
<div class="t" style="left:693.40px;top:516px;letter-spacing:-0.246px;">USD - $</div>
<div class="t" style="left:771.73px;top:516px;">31.0500</div>
<div class="t" style="left:851.67px;top:516px;">3,105.00</div>
<div class="t" style="left:915.64px;top:516px;">1.8800</div>
<div class="t" style="left:978.04px;top:516px;">188.00</div>
<div class="t" style="left:24.40px;top:530px;letter-spacing:-0.183px;">Tremendous Toys...</div>
<div class="t" style="left:125.00px;top:530px;letter-spacing:-0.039px;">50180</div>
<div class="t" style="left:169.30px;top:530px;letter-spacing:-0.079px;">60062</div>
<div class="t" style="left:231.74px;top:530px;letter-spacing:0.171px;">6/19/08</div>
<div class="t" style="left:291.74px;top:530px;letter-spacing:0.171px;">6/19/08</div>
<div class="t" style="left:343.60px;top:530px;letter-spacing:-0.550px;transform:scaleX(0.9459);">CTRUCK1</div>
<div class="t" style="left:418.00px;top:530px;letter-spacing:-0.174px;">Custom Tough...</div>
<div class="t" style="left:528.97px;top:530px;">99.00</div>
<div class="t" style="left:576.93px;top:530px;">28.8000</div>
<div class="t" style="left:633.97px;top:530px;">2,851.20</div>
<div class="t" style="left:693.40px;top:530px;letter-spacing:-0.246px;">USD - $</div>
<div class="t" style="left:771.73px;top:530px;">28.8000</div>
<div class="t" style="left:851.67px;top:530px;">2,851.20</div>
<div class="t" style="left:915.64px;top:530px;">1.5440</div>
<div class="t" style="left:978.04px;top:530px;">152.86</div>
<div class="t" style="left:24.40px;top:544px;letter-spacing:-0.183px;">Tremendous Toys...</div>
<div class="t" style="left:125.00px;top:544px;letter-spacing:-0.039px;">50181</div>
<div class="t" style="left:169.30px;top:544px;letter-spacing:-0.079px;">60063</div>
<div class="t" style="left:231.74px;top:544px;letter-spacing:0.171px;">6/20/08</div>
<div class="t" style="left:291.74px;top:544px;letter-spacing:0.171px;">6/20/08</div>
<div class="t" style="left:343.60px;top:544px;letter-spacing:-0.550px;transform:scaleX(0.9370);">STRUCK1</div>
<div class="t" style="left:418.00px;top:544px;letter-spacing:-0.038px;">Collectors Aut...</div>
<div class="t" style="left:535.08px;top:544px;">1.00</div>
<div class="t" style="left:576.93px;top:544px;">89.1000</div>
<div class="t" style="left:649.27px;top:544px;">89.10</div>
<div class="t" style="left:693.40px;top:544px;letter-spacing:-0.246px;">USD - $</div>
<div class="t" style="left:771.73px;top:544px;">89.1000</div>
<div class="t" style="left:866.97px;top:544px;">89.10</div>
<div class="t" style="left:910.35px;top:544px;">11.8600</div>
<div class="t" style="left:984.98px;top:544px;">11.86</div>
<div class="t" style="left:24.40px;top:558px;letter-spacing:-0.183px;">Tremendous Toys...</div>
<div class="t" style="left:125.00px;top:558px;letter-spacing:-0.039px;">50182</div>
<div class="t" style="left:169.30px;top:558px;letter-spacing:-0.079px;">60064</div>
<div class="t" style="left:231.74px;top:558px;letter-spacing:0.171px;">6/20/08</div>
<div class="t" style="left:291.74px;top:558px;letter-spacing:0.171px;">6/20/08</div>
<div class="t" style="left:343.60px;top:558px;letter-spacing:-0.550px;transform:scaleX(0.9475);">YTRUCK1</div>
<div class="t" style="left:418.00px;top:558px;letter-spacing:-0.178px;">Yellow Tough ...</div>
<div class="t" style="left:522.84px;top:558px;">100.00</div>
<div class="t" style="left:583.04px;top:558px;">9.5000</div>
<div class="t" style="left:643.14px;top:558px;">950.00</div>
<div class="t" style="left:693.40px;top:558px;letter-spacing:-0.246px;">USD - $</div>
<div class="t" style="left:777.84px;top:558px;">9.5000</div>
<div class="t" style="left:860.84px;top:558px;">950.00</div>
<div class="t" style="left:915.64px;top:558px;">2.5634</div>
<div class="t" style="left:978.04px;top:558px;">256.34</div>
<div class="t" style="left:24.40px;top:572px;letter-spacing:-0.183px;">Tremendous Toys...</div>
<div class="t" style="left:125.00px;top:572px;letter-spacing:-0.039px;">50183</div>
<div class="t" style="left:169.30px;top:572px;letter-spacing:-0.079px;">60065</div>
<div class="t" style="left:234.80px;top:572px;letter-spacing:0.201px;">9/8/08</div>
<div class="t" style="left:291.74px;top:572px;letter-spacing:0.171px;">7/15/08</div>
<div class="t" style="left:343.60px;top:572px;letter-spacing:-0.550px;transform:scaleX(0.9596);">WTRUCK1</div>
<div class="t" style="left:418.00px;top:572px;letter-spacing:-0.124px;">White Tough T...</div>
<div class="t" style="left:513.67px;top:572px;">3,000.00</div>
<div class="t" style="left:576.93px;top:572px;">15.0000</div>
<div class="t" style="left:627.86px;top:572px;">45,000.00</div>
<div class="t" style="left:693.40px;top:572px;letter-spacing:-0.246px;">USD - $</div>
<div class="t" style="left:771.73px;top:572px;">15.0000</div>
<div class="t" style="left:845.56px;top:572px;">45,000.00</div>
<div class="t" style="left:915.64px;top:572px;">2.5678</div>
<div class="t" style="left:968.87px;top:572px;">7,703.40</div>
<div class="t" style="left:24.40px;top:586px;letter-spacing:-0.183px;">Tremendous Toys...</div>
<div class="t" style="left:125.00px;top:586px;letter-spacing:-0.039px;">50183</div>
<div class="t" style="left:169.30px;top:586px;letter-spacing:-0.079px;">60066</div>
<div class="t" style="left:234.80px;top:586px;letter-spacing:0.201px;">9/8/08</div>
<div class="t" style="left:294.80px;top:586px;letter-spacing:0.201px;">9/8/08</div>
<div class="t" style="left:343.60px;top:586px;letter-spacing:-0.550px;transform:scaleX(0.9596);">WTRUCK1</div>
<div class="t" style="left:418.00px;top:586px;letter-spacing:-0.124px;">White Tough T...</div>
<div class="t" style="left:513.67px;top:586px;">4,000.00</div>
<div class="t" style="left:583.04px;top:586px;">9.8910</div>
<div class="t" style="left:627.86px;top:586px;">39,564.00</div>
<div class="t" style="left:693.40px;top:586px;letter-spacing:-0.246px;">USD - $</div>
<div class="t" style="left:777.84px;top:586px;">9.8910</div>
<div class="t" style="left:845.56px;top:586px;">39,564.00</div>
<div class="t" style="left:915.64px;top:586px;">2.5678</div>
<div class="t" style="left:962.76px;top:586px;">10,271.20</div>
<div class="t" style="left:24.40px;top:600px;letter-spacing:-0.183px;">Tremendous Toys...</div>
<div class="t" style="left:125.00px;top:600px;letter-spacing:-0.039px;">50183</div>
<div class="t" style="left:169.30px;top:600px;letter-spacing:-0.079px;">60067</div>
<div class="t" style="left:234.80px;top:600px;letter-spacing:0.201px;">9/8/08</div>
<div class="t" style="left:294.80px;top:600px;letter-spacing:0.201px;">9/8/08</div>
<div class="t" style="left:343.60px;top:600px;letter-spacing:-0.550px;transform:scaleX(0.9596);">WTRUCK1</div>
<div class="t" style="left:418.00px;top:600px;letter-spacing:-0.124px;">White Tough T...</div>
<div class="t" style="left:513.67px;top:600px;">3,000.00</div>
<div class="t" style="left:576.93px;top:600px;">15.0000</div>
<div class="t" style="left:627.86px;top:600px;">45,000.00</div>
<div class="t" style="left:693.40px;top:600px;letter-spacing:-0.246px;">USD - $</div>
<div class="t" style="left:771.73px;top:600px;">15.0000</div>
<div class="t" style="left:845.56px;top:600px;">45,000.00</div>
<div class="t" style="left:915.64px;top:600px;">2.5678</div>
<div class="t" style="left:968.87px;top:600px;">7,703.40</div>
</div>
<!-- scrollbar -->
<div class="abs" id="sb"></div>
<div class="abs" style="left:1036px;top:242px;width:1px;height:367px;background:#b4c7dd"></div>
<div class="sbb" style="top:243px"></div>
<div class="sbl" style="top:258px"></div>
<div class="abs" id="thumb"></div>
<div class="sbl" style="top:428px"></div>
<div class="sbb" style="top:593px"></div>
<svg class="abs" style="left:1024px;top:247px" width="9" height="6" shape-rendering="crispEdges"><path d="M4 0h1v1h-1zM3 1h3v1h-3zM2 2h5v1h-5zM1 3h3v1h-3zM5 3h3v1h-3zM0 4h3v1h-3zM6 4h3v1h-3zM1 5h1v1h-1zM7 5h1v1h-1z" fill="#4d6185"/></svg><svg class="abs" style="left:1024px;top:598px" width="9" height="6" shape-rendering="crispEdges"><path d="M1 0h1v1h-1zM7 0h1v1h-1zM0 1h3v1h-3zM6 1h3v1h-3zM1 2h3v1h-3zM5 2h3v1h-3zM2 3h5v1h-5zM3 4h3v1h-3zM4 5h1v1h-1z" fill="#4d6185"/></svg><svg class="abs" style="left:1025px;top:340px" width="8" height="8" shape-rendering="crispEdges"><rect x="0" y="0" width="6" height="1" fill="#eef4fe"/><rect x="1" y="1" width="6" height="1" fill="#8cb0f8"/><rect x="0" y="2" width="6" height="1" fill="#eef4fe"/><rect x="1" y="3" width="6" height="1" fill="#8cb0f8"/><rect x="0" y="4" width="6" height="1" fill="#eef4fe"/><rect x="1" y="5" width="6" height="1" fill="#8cb0f8"/><rect x="0" y="6" width="6" height="1" fill="#eef4fe"/><rect x="1" y="7" width="6" height="1" fill="#8cb0f8"/></svg>

<div class="t" style="left:51.40px;top:56px;letter-spacing:-0.232px;">All Customer Types</div>
<div class="t" style="left:51.40px;top:80px;letter-spacing:-0.153px;">Selected:</div>
<div class="t" style="left:51.40px;top:105px;letter-spacing:0.146px;">Pattern:</div>
<div class="t" style="left:108.20px;top:80px;letter-spacing:-0.410px;">NORMAL-Normal Domestic Customers</div>
<div class="t" style="left:439.00px;top:52px;letter-spacing:-0.190px;">Show Costs</div>
<div class="t" style="left:439.00px;top:75px;letter-spacing:-0.313px;">Show Prices</div>
<div class="t" style="left:51.00px;top:154px;letter-spacing:-0.228px;">All Sites</div>
<div class="t" style="left:51.00px;top:179px;letter-spacing:-0.119px;">Selected:</div>
<div class="t" style="left:109.70px;top:179px;letter-spacing:-0.550px;transform:scaleX(0.9604);">WH1</div>
<div class="t" style="left:284.27px;top:157px;letter-spacing:0.166px;">Start Date:</div>
<div class="t" style="left:289.95px;top:186px;letter-spacing:-0.047px;">End Date:</div>
<div class="t" style="left:347.40px;top:157px;letter-spacing:0.273px;">12/11/06</div>
<div class="t" style="left:347.40px;top:186px;letter-spacing:0.268px;">9/5/09</div>
<div class="t" style="left:20.00px;top:227px;letter-spacing:-0.161px;">Sales History:</div>
<div class="t" style="left:985.19px;top:49px;letter-spacing:-0.425px;">Close</div>
<div class="t" style="left:983.42px;top:73px;letter-spacing:0.046px;">Query</div>
<div class="t" style="left:987.20px;top:97px;">Print</div>
<!-- context menu -->
<div class="abs" id="menu">
  <div class="msep" style="top:41px"></div>
  <div class="msep" style="top:104px"></div>
</div>
<div class="t" style="left:260.80px;top:377px;letter-spacing:0.268px;">Edit...</div>
<div class="t" style="left:260.80px;top:395px;letter-spacing:0.254px;">View...</div>
<div class="t" style="left:260.80px;top:422px;letter-spacing:-0.095px;">Copy All</div>
<div class="t" style="left:260.80px;top:440px;letter-spacing:-0.144px;">Copy Row</div>
<div class="t" style="left:260.80px;top:458px;letter-spacing:-0.188px;">Copy Cell</div>
<div class="t" style="left:260.80px;top:485px;letter-spacing:0.153px;">Export Contents...</div>
</body>
</html>
